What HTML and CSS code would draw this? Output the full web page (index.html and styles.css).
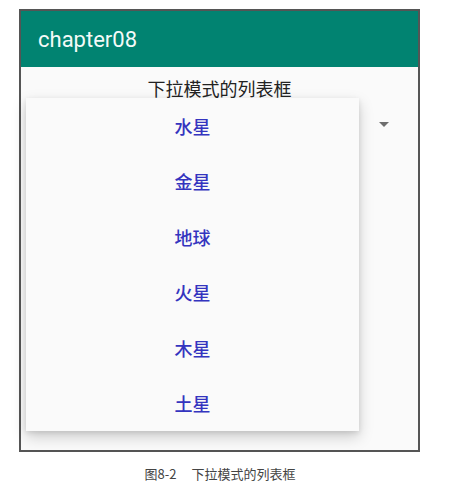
FILE: index.html
```html
<!DOCTYPE html>
<html lang="zh-CN">
<head>
<meta charset="utf-8">
<title>chapter08</title>
<link rel="stylesheet" href="styles.css">
</head>
<body>
<div class="frame">
  <header class="appbar">chapter08</header>
  <main class="content">
    <div class="heading">下拉模式的列表框</div>
    <div class="spinner">
      <svg class="arrow" width="10" height="5" viewBox="0 0 10 5"><path d="M0 0H10L5 5Z" fill="#6e6e6e"/></svg>
    </div>
  </main>
  <ul class="popup">
    <li>水星</li>
    <li>金星</li>
    <li>地球</li>
    <li>火星</li>
    <li>木星</li>
    <li>土星</li>
  </ul>
</div>
<p class="figcap">图8-2<span class="gap"></span>下拉模式的列表框</p>
</body>
</html>
```
FILE: styles.css
```css
html, body {
  margin: 0;
  padding: 0;
  background: #ffffff;
}
body {
  font-family: "Noto Sans CJK SC", "Noto Sans", sans-serif;
}
.frame {
  position: relative;
  box-sizing: border-box;
  width: 401px;
  height: 443px;
  margin: 9px 0 0 19px;
  border: 2px solid #555;
  background: #fafafa;
  display: flex;
  flex-direction: column;
}
.appbar {
  height: 56px;
  background: #018371;
  color: #f4faf8;
  font-family: Roboto, "Liberation Sans", sans-serif;
  font-size: 22px;
  display: flex;
  align-items: center;
  padding-left: 17px;
  flex: none;
}
.content {
  flex: 1;
  display: flex;
  flex-direction: column;
}
.heading {
  text-align: center;
  font-size: 18px;
  line-height: 24px;
  color: #222;
  padding-top: 9px;
}
.spinner {
  height: 51px;
  display: flex;
  align-items: center;
  justify-content: flex-end;
  padding-right: 29px;
}
.arrow {
  display: block;
  margin-top: -3px;
}
.popup {
  position: absolute;
  left: 5px;
  top: 87px;
  width: 333px;
  height: 333px;
  margin: 0;
  padding: 0;
  list-style: none;
  background: #fafafa;
  box-shadow: 0 6px 14px rgba(0,0,0,0.18), 0 2px 5px rgba(0,0,0,0.10);
  display: flex;
  flex-direction: column;
}
.popup li {
  flex: 1;
  display: flex;
  align-items: center;
  justify-content: center;
  font-size: 18px;
  color: #3434bf;
  font-weight: 500;
}
.figcap {
  margin: 13px 0 0 0;
  width: 440px;
  text-align: center;
  font-size: 13px;
  line-height: 18px;
  color: #444;
}
.gap {
  display: inline-block;
  width: 15px;
}
```
